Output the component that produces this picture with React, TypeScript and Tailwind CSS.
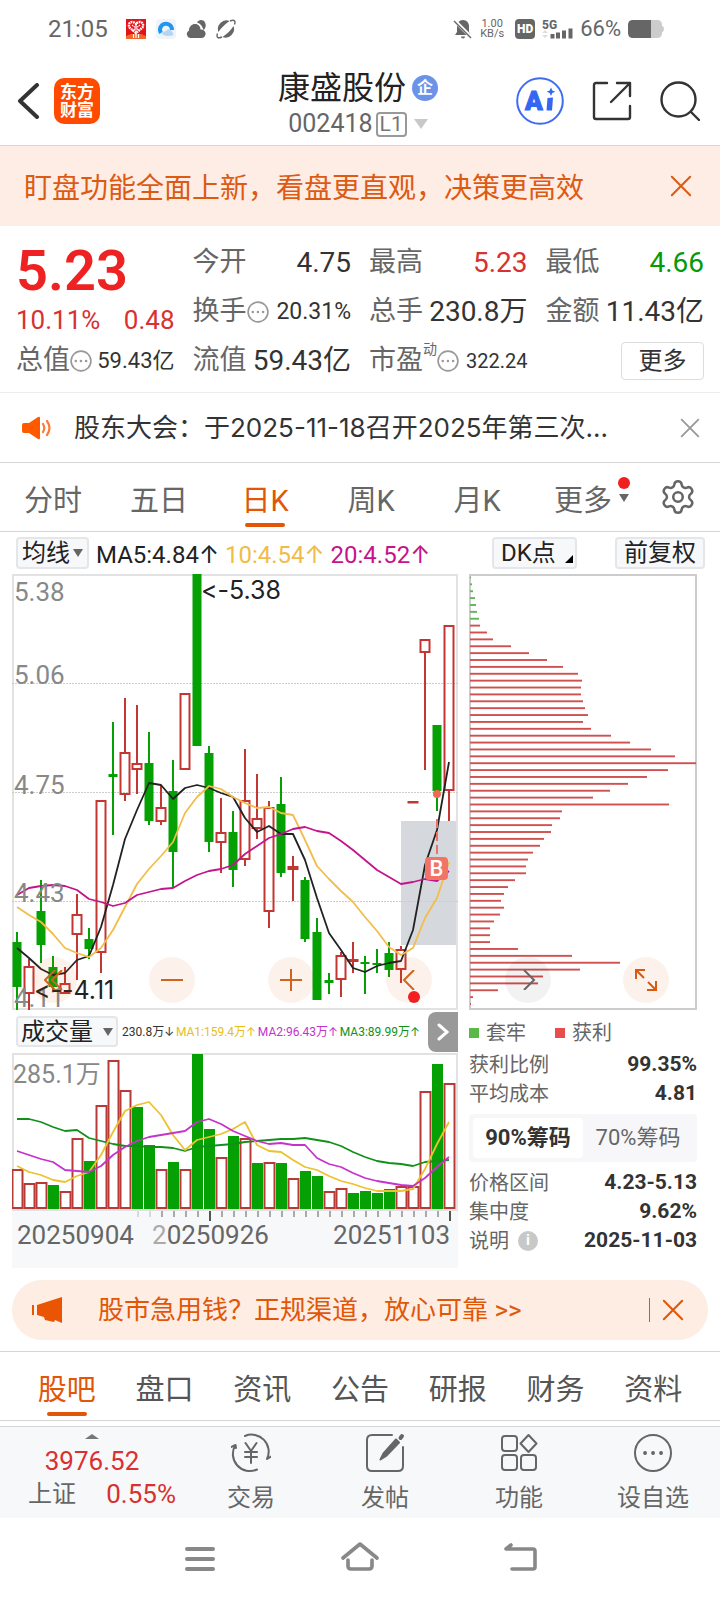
import React from "react";
import { Settings } from "lucide-react";

const STEP = 12;
const FIRST_X = 5;

// [high, body top, body bottom, low, rising]
const candles: [number, number, number, number, boolean][] = [
  [358, 368, 413, 436, false],
  [385, 392, 420, 436, true],
  [306, 337, 371, 389, false],
  [382, 393, 413, 416, false],
  [393, 409, 420, 420, true],
  [320, 340, 361, 406, true],
  [354, 365, 375, 385, false],
  [226, 226, 379, 399, true],
  [148, 200, 203, 261, false],
  [124, 178, 221, 227, true],
  [131, 189, 196, 220, true],
  [158, 189, 247, 251, false],
  [211, 233, 248, 251, true],
  [186, 217, 278, 314, false],
  [119, 119, 196, 196, true],
  [0, 0, 172, 172, false],
  [172, 179, 268, 278, false],
  [224, 258, 269, 299, true],
  [237, 258, 296, 313, false],
  [175, 226, 286, 292, true],
  [200, 244, 255, 265, true],
  [227, 233, 338, 354, true],
  [203, 230, 299, 303, false],
  [282, 292, 296, 327, true],
  [303, 306, 365, 368, false],
  [344, 358, 426, 426, false],
  [399, 406, 409, 420, false],
  [378, 381, 406, 423, true],
  [368, 385, 388, 399, true],
  [382, 388, 390, 420, false],
  [375, 389, 391, 399, false],
  [368, 379, 396, 403, false],
  [372, 375, 396, 409, true],
  [227, 227, 227, 227, true],
  [65, 65, 79, 196, true],
  [151, 151, 217, 237, false],
  [51, 51, 217, 247, true],
];

const ma5 = [374, 384, 395, 401, 399, 386, 382, 353, 311, 265, 236, 209, 211, 225, 214, 211, 214, 219, 223, 244, 258, 252, 260, 260, 286, 324, 359, 376, 394, 398, 392, 389, 387, 356, 291, 256, 188];
const ma10 = [333, 341, 348, 360, 374, 379, 383, 374, 356, 333, 310, 295, 282, 268, 239, 223, 212, 215, 223, 229, 234, 233, 239, 241, 266, 292, 305, 317, 328, 343, 357, 373, 381, 374, 344, 324, 288];
const ma20 = [321, 314, 312, 311, 312, 316, 325, 328, 332, 329, 321, 318, 315, 314, 307, 301, 297, 295, 291, 280, 272, 264, 260, 255, 253, 257, 259, 267, 276, 286, 296, 303, 310, 308, 305, 307, 297];

const volumeTops = [116, 130, 129, 132, 138, 85, 108, 52, 7, 37, 54, 92, 116, 109, 116, 1, 76, 104, 83, 85, 110, 109, 110, 125, 118, 123, 138, 135, 140, 138, 140, 136, 133, 133, 38, 11, 30];
const fallingVolume = [3, 6, 10, 11, 13, 15, 16, 18, 20, 22, 24, 25, 28, 29, 30, 31, 35];
const volMa1 = [113, 119, 122, 127, 129, 123, 119, 102, 79, 58, 52, 49, 62, 82, 97, 87, 84, 81, 76, 69, 92, 98, 99, 107, 114, 117, 123, 128, 131, 135, 138, 138, 138, 136, 116, 91, 69];
const volMa2 = [98, 102, 106, 109, 117, 118, 119, 113, 102, 94, 88, 84, 82, 80, 78, 69, 66, 71, 78, 83, 88, 91, 90, 92, 92, 105, 111, 114, 120, 125, 128, 130, 132, 133, 125, 114, 104];
const volMa3 = [66, 66, 69, 74, 78, 77, 85, 88, 91, 93, 93, 94, 94, 95, 98, 94, 93, 92, 91, 89, 88, 87, 86, 86, 85, 87, 89, 93, 99, 104, 108, 110, 111, 113, 109, 108, 107];

const chipLengths = [1, 2, 3, 5, 6, 7, 9, 10, 17, 23, 41, 59, 77, 93, 108, 112, 111, 111, 113, 115, 118, 113, 121, 141, 160, 181, 205, 226, 198, 177, 158, 140, 123, 199, 92, 90, 82, 81, 74, 70, 63, 58, 56, 56, 45, 38, 34, 31, 34, 30, 24, 20, 20, 20, 48, 102, 150, 110, 73, 68, 28, 3, 1];

const toPoints = (ys: number[]) => ys.map((y, i) => `${FIRST_X + i * STEP},${y}`).join(" ");

const CloseIcon = ({ className }: { className: string }) => (
  <svg className={className} viewBox="0 0 24 24" fill="none" stroke="currentColor" strokeWidth="2.2" strokeLinecap="round">
    <path d="M2 2 22 22M22 2 2 22" />
  </svg>
);

const Caret = ({ className }: { className: string }) => (
  <svg className={className} viewBox="0 0 10 9" preserveAspectRatio="none" fill="currentColor">
    <path d="M0 0h10L5 9z" />
  </svg>
);

const Arrow = ({ down = false }: { down?: boolean }) => (
  <span className="font-[Inter]">{down ? "↓" : "↑"}</span>
);

const MoreDots = () => (
  <svg className="size-[22px] shrink-0 text-[#999]" viewBox="0 0 20 20" fill="none" stroke="currentColor" strokeWidth="1.5">
    <circle cx="10" cy="10" r="9" />
    <path d="M5.200 10h.1M9.900 10h.1M14.600 10h.1" strokeWidth="2.200" strokeLinecap="round" />
  </svg>
);

const StatusBar = () => (
  <div className="flex h-[57px] items-center justify-between pr-14 pl-12 text-[#666]">
    <div className="flex items-center gap-[10px]">
      <span className="mr-2 text-[24px] leading-none">21:05</span>
      <svg className="size-5" viewBox="0 0 20 20">
        <rect width="20" height="20" fill="#e2141b" />
        <path d="M0 20v-3l5-2h10l5 2v3z" fill="#f4662a" />
        <path d="M10 14 3.500 8.500C2 6 3.500 3 6 3c2 0 3.200 1 4 2.200C10.800 4 12 3 14 3c2.500 0 4 3 2.500 5.500z" fill="none" stroke="#fff" strokeWidth="2.400" strokeDasharray="1.700 .7" />
        <path d="m6 6 8 6M14 6l-8 6M10 5v8" stroke="#fff" strokeWidth="1.200" strokeDasharray="1.500 .6" />
        <path d="M7.500 19v-4M10 19v-5M12.500 19v-4" stroke="#fff" strokeWidth="1.200" />
      </svg>
      <svg className="size-5" viewBox="0 0 20 20">
        <rect width="20" height="20" rx="4" fill="#eef4fa" />
        <path d="M5 14a6 6 0 1 1 11-3" fill="none" stroke="#2196ee" strokeWidth="4" />
        <path d="M6 15c1.500-3 4-2.500 5-4 2.500-1.500 6 1 6.500 5-3 1.500-8 1.500-11.500-1z" fill="#b5d6f2" />
      </svg>
      <svg className="size-5" viewBox="0 0 20 20" fill="currentColor">
        <path d="M4 19a4 4 0 0 1-1-7.500C3 7.500 6 5 9 5c3.500 0 5.500 2.500 5.500 5.500A4.300 4.300 0 0 1 16 19z" />
        <path d="M11 3.500c1.500-3 6-3.500 8 0 1.500 3 .5 6-1.500 7.500-1-3.500-3-6.500-6.500-7.500z" />
      </svg>
      <svg className="size-5" viewBox="0 0 20 20" fill="currentColor">
        <path d="M2.500 13A8.500 8.500 0 0 1 13.500 2C9 5 5 9 2.500 13z" />
        <path d="M17.500 7A8.500 8.500 0 0 1 6.500 18C11 15 15 11 17.500 7z" />
        <path d="M14 2c4-1.800 6-.5 4.500 3.500M1.500 14.500C0 18.500 2 19.800 6 18" fill="none" stroke="currentColor" strokeWidth="1.400" />
      </svg>
    </div>
    <div className="flex items-center gap-[7px]">
      <svg className="size-5" viewBox="0 0 20 20">
        <path d="M10 1c-4 0-6 3-6 6.500V13l-2 3h16l-2-3V7.500C16 4 14 1 10 1zM8 17.500a2 2 0 0 0 4 0z" fill="currentColor" />
        <path d="m1.500 1.500 17 17" stroke="#fff" strokeWidth="3.500" />
        <path d="m1 2 17 17" stroke="currentColor" strokeWidth="1.400" />
      </svg>
      <span className="mr-1 text-center text-[11px] leading-[10px]">
        1.00
        <br />
        KB/s
      </span>
      <span className="flex size-5 items-center justify-center rounded-[4px] bg-[#666] text-[12px] leading-none font-black text-white">HD</span>
      <svg className="h-5 w-[31px] overflow-visible" viewBox="0 0 31 20" fill="currentColor">
        <text x="0" y="10" fontSize="12" fontWeight="800">5G</text>
        <path d="M8.500 15h4v4.500h-4zM14 13.500h4v6h-4zM20 11.500h4v8h-4zM26.500 9.500h4v10h-4z" />
        <path d="m0 14 3-3 3 3zM0 16l3 3 3-3z" fill="#ddd" />
      </svg>
      <span className="text-[22px] leading-none">66%</span>
      <svg className="h-[18px] w-9" viewBox="0 0 36 18">
        <path d="M5 0h24q5 0 5 5v.5q2 1 2 3.500t-2 3.500v.5q0 5-5 5H5z" fill="#ccc" />
        <path d="M5 0h18v18H5q-5 0-5-5V5q0-5 5-5z" fill="#666" />
      </svg>
    </div>
  </div>
);

const Header = () => (
  <header className="grid h-[89px] grid-cols-[1fr_auto_1fr] items-center border-b border-[#d5d5d5] pr-5 pl-4 text-[#333]">
    <div className="flex items-center gap-[14px]">
      <button aria-label="返回">
        <svg className="h-9 w-6" viewBox="0 0 24 36" fill="none" stroke="currentColor" strokeWidth="4" strokeLinecap="round" strokeLinejoin="round">
          <path d="M21 2 4 18l17 16" />
        </svg>
      </button>
      <a href="#" className="flex size-[46px] flex-col items-center justify-center rounded-[10px] bg-[#ff4a00] text-[17px] leading-[18px] font-bold text-white">
        <span>东方</span>
        <span>财富</span>
      </a>
    </div>
    <div className="flex flex-col items-center gap-1 pt-[6px]">
      <h1 className="flex items-center gap-[6px] text-[32px] leading-9 text-[#222]">
        康盛股份
        <span className="flex size-[26px] items-center justify-center rounded-full bg-[#6b93e8] text-[16px] leading-none font-bold text-white">企</span>
      </h1>
      <button className="flex items-center gap-[3px] text-[25px] leading-7 text-[#666]">
        002418
        <span className="rounded-[4px] border-2 border-[#999] px-[2px] text-[21px] leading-[21px] text-[#777]">L1</span>
        <Caret className="ml-1 h-[10px] w-[14px] text-[#c8c8c8]" />
      </button>
    </div>
    <div className="flex items-center justify-end gap-7">
      <button aria-label="Ai">
        <svg className="size-12" viewBox="0 0 48 48">
          <circle cx="24" cy="24" r="22.800" fill="none" stroke="#3f6bf0" strokeWidth="2" />
          <text x="9" y="33" fontSize="26" fontWeight="900" fill="#3366f5" stroke="#3366f5">A</text>
          <path d="m31.500 21 5.500-.5-1 13h-5.500z" fill="#3366f5" />
          <path d="m35 10.500 1.300 3 3 1.300-3 1.300-1.300 3-1.300-3-3-1.300 3-1.300z" fill="#3366f5" />
        </svg>
      </button>
      <button aria-label="分享">
        <svg className="size-10" viewBox="0 0 40 40" fill="none" stroke="currentColor" strokeWidth="2.400" strokeLinecap="round" strokeLinejoin="round">
          <path d="M15 2H4q-2 0-2 2v32q0 2 2 2h32q2 0 2-2V25M25 2h13v13M38 2 19 21" />
        </svg>
      </button>
      <button aria-label="搜索">
        <svg className="size-10" viewBox="0 0 40 40" fill="none" stroke="currentColor" strokeWidth="2.400" strokeLinecap="round">
          <circle cx="18.500" cy="18.500" r="17" />
          <path d="m31 31 8 8" />
        </svg>
      </button>
    </div>
  </header>
);

type CellProps = { label: string; value: string; size?: string; color?: string; dots?: boolean };

const Cell = ({ label, value, size = "text-[28px]", color = "text-[#333]", dots }: CellProps) => (
  <div className="flex items-center justify-between whitespace-nowrap">
    <span className="flex items-center text-[27px] text-[#666]">
      {label}
      {dots && <MoreDots />}
    </span>
    <span className={`${size} ${color}`}>{value}</span>
  </div>
);

const Quote = () => (
  <section className="grid auto-rows-[49px] grid-cols-4 gap-x-[18px] border-b border-[#ececec] px-4 pt-3 pb-[7px] leading-none">
    <div className="row-span-2 flex flex-col text-[#e22]">
      <span className="text-[56px] leading-[66px] font-semibold">5.23</span>
      <span className="flex justify-between text-[26px] leading-8 text-[#d93030]">
        <span>10.11%</span>
        <span>0.48</span>
      </span>
    </div>
    <Cell label="今开" value="4.75" />
    <Cell label="最高" value="5.23" color="text-[#d93030]" />
    <Cell label="最低" value="4.66" color="text-[#069a06]" />
    <Cell label="换手" value="20.31%" size="text-[23px]" dots />
    <Cell label="总手" value="230.8万" />
    <Cell label="金额" value="11.43亿" />
    <Cell label="总值" value="59.43亿" size="text-[22px]" dots />
    <Cell label="流值" value="59.43亿" />
    <div className="flex items-center justify-between">
      <span className="flex items-center text-[27px] text-[#666]">
        市盈
        <sup className="-top-3 text-[14px]">动</sup>
        <MoreDots />
      </span>
      <span className="text-[20px] text-[#333]">322.24</span>
    </div>
    <button className="h-[38px] w-[83px] self-center justify-self-end rounded-[4px] border border-[#ddd] text-[24px] text-[#333]">更多</button>
  </section>
);

const News = () => (
  <div className="flex h-[70px] items-center border-b border-[#d5d5d5] pr-5 pl-[22px] text-[#333]">
    <svg className="mr-[22px] h-6 w-[30px] shrink-0" viewBox="0 0 30 24">
      <path d="M2 7h5l9-6q2-1 2 1v20q0 2-2 1l-9-6H2q-2 0-2-2V9q0-2 2-2z" fill="#ff5a00" />
      <path d="M21 8q2.500 4 0 8M25 5q5 7 0 14" fill="none" stroke="#ff7a33" strokeWidth="2.200" strokeLinecap="round" />
    </svg>
    <a href="#" className="flex-1 truncate font-[Inter,'Noto_Sans_CJK_SC',sans-serif] text-[26px] leading-9">股东大会：于2025-11-18召开2025年第三次...</a>
    <button aria-label="关闭">
      <CloseIcon className="size-5 text-[#999]" />
    </button>
  </div>
);

const periods = ["分时", "五日", "日K", "周K", "月K", "更多"];

const PeriodTabs = () => (
  <nav className="flex h-[69px] items-center border-b border-[#d5d5d5] text-[29px] leading-none text-[#666]">
    <div className="grid flex-1 grid-cols-6">
      {periods.map((p) => (
        <button key={p} className={p === "日K" ? "relative h-[68px] pt-2 text-[#e25608]" : "relative h-[68px] pt-2"}>
          {p}
          {p === "日K" && <span className="absolute bottom-1 left-1/2 h-1 w-10 -translate-x-1/2 rounded-full bg-[#e25608]" />}
          {p === "更多" && (
            <>
              <span className="absolute top-[14px] right-[6px] size-3 rounded-full bg-[#f02020]" />
              <Caret className="absolute top-[31px] right-[7px] h-2 w-[10px]" />
            </>
          )}
        </button>
      ))}
    </div>
    <button aria-label="设置" className="flex w-[84px] justify-center">
      <Settings size={38} strokeWidth={1.6} />
    </button>
  </nav>
);

const ChartToolbar = () => (
  <div className="flex h-[42px] items-center pr-[15px] pl-4 text-[24px] leading-none whitespace-nowrap text-[#222]">
    <button className="flex h-8 items-center gap-[3px] rounded-[4px] border-2 border-[#e4e6ea] bg-[#f7f8fa] px-1">
      均线
      <Caret className="h-2 w-[10px] text-[#666]" />
    </button>
    <div className="flex flex-1 gap-[6px] pt-[3px] pl-[7px]">
      <span>MA5:4.84<Arrow /></span>
      <span className="text-[#f0bc48]">10:4.54<Arrow /></span>
      <span className="text-[#c4148c]">20:4.52<Arrow /></span>
    </div>
    <button className="relative mr-[38px] h-8 w-[85px] rounded-[4px] border-2 border-[#e4e6ea] bg-[#f7f8fa] pl-[7px] text-left">
      DK点
      <svg className="absolute right-[2px] bottom-1 size-2" viewBox="0 0 8 8">
        <path d="M8 0v8H0z" />
      </svg>
    </button>
    <button className="h-8 rounded-[4px] border-2 border-[#e4e6ea] bg-[#f7f8fa] px-[7px]">前复权</button>
  </div>
);

const KLine = () => (
  <svg className="block h-auto w-full" viewBox="0 0 446 436">
    <rect x="389" y="247" width="56" height="124" fill="#d5d8dc" />
    <rect x="1" y="1" width="444" height="434" fill="none" stroke="#e2e2e2" strokeWidth="2" />
    {[109, 218, 327].map((y) => (
      <path key={y} d={`M0 ${y}.500H446`} stroke="#ccc" strokeDasharray="2 1" />
    ))}
    {candles.map(([high, top, bottom, low, rising], i) => {
      const x = FIRST_X + i * STEP;
      return rising ? (
        <g key={i} stroke="#c43632" strokeWidth="2" fill="none">
          <path d={`M${x} ${high}V${top}M${x} ${bottom}V${low}`} />
          <rect x={x - 4.5} y={top + 1} width="9" height={Math.max(bottom - top - 2, 0.5)} />
        </g>
      ) : (
        <g key={i} fill="#04a004">
          <rect x={x - 1} y={high} width="2" height={low - high} />
          <rect x={x - 4.5} y={top} width="9" height={bottom - top} />
        </g>
      );
    })}
    <g fill="none" strokeWidth="1.800" strokeLinejoin="round">
      <polyline points={toPoints(ma5)} stroke="#222" />
      <polyline points={toPoints(ma10)} stroke="#f2bd4a" />
      <polyline points={toPoints(ma20)} stroke="#c4148c" />
    </g>
    <path d="M425 245v38" stroke="#ee7261" strokeWidth="2" strokeDasharray="9 4" />
    <circle cx="425" cy="220" r="4" fill="#ee6a55" />
    <rect x="413" y="283" width="23" height="23" rx="4" fill="#f27464" />
    <text x="424.500" y="302" fontSize="22" fontWeight="500" textAnchor="middle" fill="#fff">B</text>
    <g fontSize="26" fill="#888">
      <text x="2" y="27">5.38</text>
      <text x="2" y="110">5.06</text>
      <text x="2" y="220">4.75</text>
      <text x="2" y="328">4.43</text>
      <text x="2" y="433">4.11</text>
    </g>
    <g className="font-[Inter] [font-feature-settings:'calt'_0]" fontSize="25" fill="#222">
      <text x="189" y="25">&lt;-5.38</text>
      <text x="22" y="425">&lt;--4.11</text>
    </g>
  </svg>
);

const ChipChart = () => (
  <svg className="block h-auto w-full" viewBox="0 0 228 436">
    <rect x="1" y="1" width="226" height="434" fill="none" stroke="#ccc" strokeWidth="2" />
    {chipLengths.map((len, i) => (
      <rect key={i} x="1" y={2.5 + i * 6.88} width={len} height="1.900" fill={i < 7 ? "#62b45a" : "#d05050"} />
    ))}
  </svg>
);

const round = "flex size-[46px] items-center justify-center rounded-full";

const FloatingControls = () => (
  <div className="absolute right-[28px] bottom-[7px] left-[19px] flex justify-between text-[#cf6420]">
    <button aria-label="左移" className={`${round} bg-[#ea5504]/8`}>
      <svg className="h-5 w-5" viewBox="0 0 20 20" fill="none" stroke="currentColor" strokeWidth="2">
        <path d="M11 0 1 10l10 10M18 0 8 10l10 10" />
      </svg>
    </button>
    <button aria-label="缩小" className={`${round} bg-[#ea5504]/8`}>
      <svg className="size-[22px]" viewBox="0 0 22 22" stroke="currentColor" strokeWidth="2">
        <path d="M0 11h22" />
      </svg>
    </button>
    <button aria-label="放大" className={`${round} bg-[#ea5504]/8`}>
      <svg className="size-[22px]" viewBox="0 0 22 22" stroke="currentColor" strokeWidth="2">
        <path d="M0 11h22M11 0v22" />
      </svg>
    </button>
    <button aria-label="右移" className={`${round} relative bg-[#ea5504]/8`}>
      <svg className="h-5 w-4" viewBox="0 0 16 20" fill="none" stroke="currentColor" strokeWidth="2">
        <path d="M13 0 3 10l10 10" />
      </svg>
      <span className="absolute right-3 bottom-0 size-3 rounded-full bg-[#f22020]" />
    </button>
    <button aria-label="下一页" className={`${round} bg-black/5 text-[#666]`}>
      <svg className="h-5 w-4" viewBox="0 0 16 20" fill="none" stroke="currentColor" strokeWidth="2">
        <path d="m4 0 10 10L4 20" />
      </svg>
    </button>
    <button aria-label="全屏" className={`${round} bg-[#ea5504]/8 text-[#d85a10]`}>
      <svg className="size-[22px]" viewBox="0 0 22 22" fill="none" stroke="currentColor" strokeWidth="2">
        <path d="M1 10V1h9M1 1l8 8M21 12v9h-9M21 21l-8-8" />
      </svg>
    </button>
  </div>
);

const VolumeChart = () => (
  <svg className="block h-auto w-full" viewBox="0 0 446 215">
    <rect y="157" width="446" height="58" fill="#f7f8fa" />
    <path d="M0 1H445V157H1V0" fill="none" stroke="#e2e2e2" strokeWidth="2" />
    {volumeTops.map((top, i) => {
      const x = FIRST_X + i * STEP;
      return fallingVolume.includes(i) ? (
        <rect key={i} x={x - 5} y={top} width="11" height={156 - top} fill="#04a004" />
      ) : (
        <rect key={i} x={x - 4.5} y={top + 1} width="10" height={154 - top} fill="#fff" stroke="#b83a36" strokeWidth="2" />
      );
    })}
    <text x="1" y="30" fontSize="25" fill="#888">285.1万</text>
    <g fill="none" strokeWidth="1.800" strokeLinejoin="round">
      <polyline points={toPoints(volMa3)} stroke="#12901a" />
      <polyline points={toPoints(volMa1)} stroke="#ecc22e" />
      <polyline points={toPoints(volMa2)} stroke="#c433cc" />
    </g>
    {volumeTops.map((_, i) => {
      const x = FIRST_X + 1 + i * STEP;
      const tall = i === 16 || i === 36;
      if (i < 10) return null;
      return <rect key={i} x={x - 1} y="158" width="2" height={tall ? 10 : 6} fill={tall ? "#555" : "#aaa"} opacity={i < 12 ? 0.4 : 1} />;
    })}
    <g fontSize="26" fill="#666">
      <text x="5" y="191">20250904</text>
      <text x="140" y="191"><tspan fill="#aaa">2</tspan>0250926</text>
      <text x="438" y="191" textAnchor="end">20251103</text>
    </g>
  </svg>
);

const VolumePanel = () => (
  <div>
    <div className="flex h-[43px] items-center whitespace-nowrap">
      <button className="ml-1 flex h-[31px] items-center gap-[10px] rounded-[4px] border-2 border-[#e4e6ea] bg-[#f7f8fa] px-[3px] text-[24px] leading-none text-[#222]">
        成交量
        <Caret className="h-2 w-[10px] text-[#666]" />
      </button>
      <div className="flex flex-1 justify-between pr-2 pl-1 text-[12px] leading-none">
        <span className="text-[#333]">230.8万<Arrow down /></span>
        <span className="text-[#e8bd20]">MA1:159.4万<Arrow /></span>
        <span className="text-[#c433cc]">MA2:96.43万<Arrow /></span>
        <span className="text-[#12901a]">MA3:89.99万<Arrow /></span>
      </div>
      <button aria-label="展开" className="flex h-10 w-[30px] items-center justify-center rounded-l-[8px] bg-[#999]">
        <svg className="h-[18px] w-3" viewBox="0 0 12 18" fill="none" stroke="#fff" strokeWidth="3" strokeLinecap="round">
          <path d="m2 2 8 7-8 7" />
        </svg>
      </button>
    </div>
    <VolumeChart />
  </div>
);

const InfoRow = ({ label, value, info }: { label: string; value: string; info?: boolean }) => (
  <div className="flex h-[29px] items-center justify-between whitespace-nowrap">
    <dt className="flex items-center gap-[9px] text-[20px] text-[#666]">
      {label}
      {info && <span className="flex size-5 items-center justify-center rounded-full bg-[#c8c8c8] text-[15px] font-bold text-white">i</span>}
    </dt>
    <dd className="text-[21px] font-bold text-[#333]">{value}</dd>
  </div>
);

const ChipInfo = () => (
  <div className="leading-none">
    <div className="flex h-10 items-center gap-[7px] pt-[6px] text-[20px] text-[#666]">
      <span className="size-[10px] bg-[#5ab946]" />
      套牢
      <span className="ml-[22px] size-[10px] bg-[#e84c4c]" />
      获利
    </div>
    <dl>
      <InfoRow label="获利比例" value="99.35%" />
      <InfoRow label="平均成本" value="4.81" />
    </dl>
    <div className="my-[6px] grid h-12 grid-cols-2 rounded-[4px] bg-[#f7f7fa] p-1 text-[22px] whitespace-nowrap text-[#666]">
      <button className="rounded-[4px] bg-white font-bold text-[#333]">90%筹码</button>
      <button>70%筹码</button>
    </div>
    <dl>
      <InfoRow label="价格区间" value="4.23-5.13" />
      <InfoRow label="集中度" value="9.62%" />
      <InfoRow label="说明" value="2025-11-03" info />
    </dl>
  </div>
);

const Promo = () => (
  <div className="mx-3 mt-3 flex h-[60px] items-center rounded-full bg-[#fdede3] pr-6 pl-5 text-[#e25608]">
    <svg className="h-[26px] w-[30px]" viewBox="0 0 30 26" fill="#ea5504">
      <path d="M0 8h2v10H0zM5 8 30 0v26l-7-3-1 2-9-2-1-3-7-2z" />
    </svg>
    <a href="#" className="flex-1 pl-9 text-[26px] leading-none">股市急用钱？正规渠道，放心可靠 &gt;&gt;</a>
    <span className="mr-3 h-6 w-px bg-[#e25608]" />
    <button aria-label="关闭">
      <CloseIcon className="size-[22px]" />
    </button>
  </div>
);

const sections = ["股吧", "盘口", "资讯", "公告", "研报", "财务", "资料"];

const SectionTabs = () => (
  <nav className="mt-[11px] grid h-[70px] grid-cols-7 border-y border-[#d5d5d5] px-[18px] text-[29px] leading-none text-[#555]">
    {sections.map((s, i) => (
      <button key={s} className={i === 0 ? "relative pt-2 text-[#e25608]" : "pt-2"}>
        {s}
        {i === 0 && <span className="absolute bottom-1 left-1/2 h-1 w-10 -translate-x-1/2 rounded-full bg-[#e25608]" />}
      </button>
    ))}
  </nav>
);

const actions = [
  {
    label: "交易",
    icon: (
      <>
        <path d="M14 3a17 17 0 0 1 22 23l4-2.500M26 36.500A17 17 0 0 1 4.500 12L0 14M4.500 12 5 15" />
        <path d="m14.500 10 5.500 8 5.500-8M20 18v12M14 19h12M14 24h12" />
      </>
    ),
  },
  {
    label: "发帖",
    icon: (
      <>
        <path d="M27 2H7Q2 2 2 7v26q0 5 5 5h26q5 0 5-5V14" />
        <path d="m15.500 26.500 3-6L31 6.500l3 3L21 23z" fill="currentColor" />
        <path d="m35.500 5 1.500-2" strokeWidth="4" />
      </>
    ),
  },
  {
    label: "功能",
    icon: (
      <>
        <rect x="3" y="3" width="15" height="15" rx="3" />
        <path d="m29.500 2 8 8.500-8 8.500-8-8.500z" />
        <rect x="3" y="22" width="15" height="15" rx="3" />
        <rect x="22" y="22" width="15" height="15" rx="3" />
      </>
    ),
  },
  {
    label: "设自选",
    icon: (
      <>
        <circle cx="20" cy="20" r="18" />
        <path d="M12 20h.1M20 20h.1M28 20h.1" strokeWidth="3.800" />
      </>
    ),
  },
];

const BottomBar = () => (
  <div className="mt-[5px] flex h-[92px] border-t border-[#d5d5d5] bg-[#f7f8fa] leading-none text-[#666]">
    <button className="flex w-[184px] flex-col items-center pt-[7px] text-[26px] text-[#d93030]">
      <Caret className="h-[5px] w-[14px] shrink-0 rotate-180 text-[#777]" />
      <span className="mt-[9px]">3976.52</span>
      <span className="mt-[7px] flex w-full items-center justify-between pr-2 pl-7">
        <span className="text-[24px] text-[#666]">上证</span>
        0.55%
      </span>
    </button>
    {actions.map((a) => (
      <button key={a.label} className="flex flex-1 flex-col items-center pt-[6px] text-[24px]">
        <svg className="size-10" viewBox="0 0 40 40" fill="none" stroke="currentColor" strokeWidth="2" strokeLinecap="round" strokeLinejoin="round">
          {a.icon}
        </svg>
        <span className="mt-[13px]">{a.label}</span>
      </button>
    ))}
  </div>
);

const SystemNav = () => (
  <div className="flex h-[82px] items-center justify-center gap-[122px] text-[#888]">
    <button aria-label="最近任务">
      <svg className="h-[38px] w-[38px]" viewBox="0 0 38 38" stroke="currentColor" strokeWidth="4" strokeLinecap="round">
        <path d="M6 9h26M6 19h26M6 29h26" />
      </svg>
    </button>
    <button aria-label="主页">
      <svg className="h-[38px] w-[38px]" viewBox="0 0 38 38" fill="none" stroke="currentColor" strokeWidth="3.600" strokeLinecap="round" strokeLinejoin="round">
        <path d="M2 18 19 4l17 14M7 20v6q0 3 3 3h18q3 0 3-3v-6" />
      </svg>
    </button>
    <button aria-label="后退">
      <svg className="h-[38px] w-[38px]" viewBox="0 0 38 38" fill="none" stroke="currentColor" strokeWidth="3.600" strokeLinecap="round" strokeLinejoin="round">
        <path d="M10 5 5 9h27q2 0 2 2v16q0 2-2 2H11" />
      </svg>
    </button>
  </div>
);

export default function App() {
  return (
    <div className="w-full bg-white font-[Roboto,'Noto_Sans_CJK_SC',sans-serif]">
      <StatusBar />
      <Header />
      <div className="flex h-20 items-center justify-between bg-[#fdede4] pr-7 pl-6 text-[28px] leading-none text-[#dd5a12]">
        <p className="pt-[6px]">盯盘功能全面上新，看盘更直观，决策更高效</p>
        <button aria-label="关闭">
          <CloseIcon className="size-[22px]" />
        </button>
      </div>
      <Quote />
      <News />
      <PeriodTabs />
      <ChartToolbar />
      <div className="pr-[23px] pl-3">
        <div className="relative grid grid-cols-[minmax(0,446fr)_minmax(0,228fr)] gap-x-[11px]">
          <KLine />
          <ChipChart />
          <FloatingControls />
        </div>
        <div className="grid grid-cols-[minmax(0,446fr)_minmax(0,228fr)] gap-x-[11px]">
          <VolumePanel />
          <ChipInfo />
        </div>
      </div>
      <Promo />
      <SectionTabs />
      <BottomBar />
      <SystemNav />
    </div>
  );
}
